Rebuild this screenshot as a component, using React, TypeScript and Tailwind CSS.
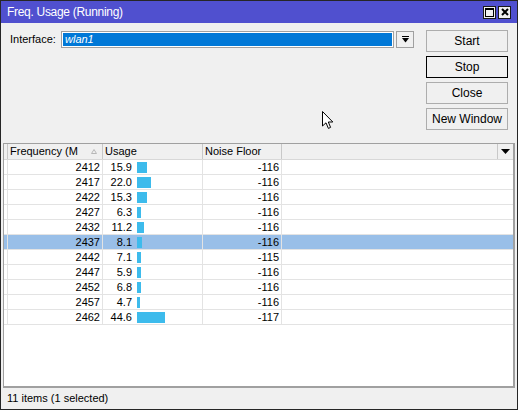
import React from "react";

type FreqRow = {
  freq: number;
  usage: string;
  noise: number;
};

const rows: FreqRow[] = [
  { freq: 2412, usage: "15.9", noise: -116 },
  { freq: 2417, usage: "22.0", noise: -116 },
  { freq: 2422, usage: "15.3", noise: -116 },
  { freq: 2427, usage: "6.3", noise: -116 },
  { freq: 2432, usage: "11.2", noise: -116 },
  { freq: 2437, usage: "8.1", noise: -116 },
  { freq: 2442, usage: "7.1", noise: -115 },
  { freq: 2447, usage: "5.9", noise: -116 },
  { freq: 2452, usage: "6.8", noise: -116 },
  { freq: 2457, usage: "4.7", noise: -116 },
  { freq: 2462, usage: "44.6", noise: -117 },
];

const selectedFreq = 2437;

function SideButton({ label, focused }: { label: string; focused?: boolean }) {
  return (
    <button
      className={
        focused
          ? "h-[22px] w-[82px] border border-black bg-[#f0f0f0] text-[12px] text-black"
          : "h-[22px] w-[82px] border border-[#adadad] bg-[#f0f0f0] text-[12px] text-black"
      }
    >
      {label}
    </button>
  );
}

export default function App() {
  return (
    <div className="relative flex h-[410px] w-[518px] flex-col overflow-hidden border border-[#262626] bg-[#f0f0f0] font-['Liberation_Sans',Arial,sans-serif] text-[11px] text-black">
      {/* title bar */}
      <div className="flex h-[22px] items-center bg-[#5050cf] pl-[6px] pr-[6px]">
        <span className="text-[12px] tracking-[-0.3px] text-white">Freq. Usage (Running)</span>
        <div className="ml-auto flex gap-[2px]">
          <div className="flex h-[13px] w-[13px] items-center justify-center border border-[#1a1a1a] bg-[#f0f0f0]">
            <svg width="9" height="9" viewBox="0 0 9 9">
              <rect x="0.5" y="0.5" width="8" height="8" fill="none" stroke="#000" />
              <rect x="0" y="0" width="9" height="2" fill="#000" />
            </svg>
          </div>
          <div className="flex h-[13px] w-[13px] items-center justify-center border border-[#1a1a1a] bg-[#f0f0f0]">
            <svg width="8" height="8" viewBox="0 0 8 8">
              <path d="M1 1 L7 7 M7 1 L1 7" stroke="#000" strokeWidth="2" />
            </svg>
          </div>
        </div>
      </div>

      {/* interface row + buttons */}
      <div className="flex h-[120px] pl-[9px] pr-[9px] pt-[7px]">
        <div className="mt-[1px] flex h-[17px] items-center">
          <span className="w-[51px]">Interface:</span>
          <div className="flex h-[17px] w-[333px] items-center border border-[#a0a0a0] bg-white p-[1px]">
            <div className="flex h-full w-full items-center bg-[#0078d7] pl-[2px] italic text-white">wlan1</div>
          </div>
          <div className="ml-[2px] flex h-[17px] w-[18px] items-center justify-center border border-[#a0a0a0] bg-[#f0f0f0]">
            <svg width="7" height="7" viewBox="0 0 7 7">
              <rect x="0" y="0" width="7" height="1" fill="#000" />
              <path d="M0 2 L7 2 L3.5 6.5 Z" fill="#000" />
            </svg>
          </div>
        </div>
        <div className="ml-auto flex flex-col gap-[4px]">
          <SideButton label="Start" />
          <SideButton label="Stop" focused />
          <SideButton label="Close" />
          <SideButton label="New Window" />
        </div>
      </div>

      {/* list */}
      <div className="ml-[2px] mr-[2px] flex min-h-0 flex-1 flex-col border-b-2 border-l border-r-2 border-t border-[#a0a0a0] bg-white">
        <div className="grid h-[16px] grid-cols-[4px_95px_100px_79px_1fr_15px] border-b border-[#d8d8d8] bg-[#f0f0f0] leading-[15px]">
          <div className="border-r border-[#c8c8c8]" />
          <div className="flex items-center border-r border-[#c8c8c8] pl-[2px]">
            <span>Frequency (M</span>
            <svg className="ml-auto mr-[5px]" width="6" height="5" viewBox="0 0 6 5">
              <path d="M3 0.5 L5.5 4.5 L0.5 4.5 Z" fill="none" stroke="#b8b8b8" />
            </svg>
          </div>
          <div className="border-r border-[#c8c8c8] pl-[2px]">Usage</div>
          <div className="border-r border-[#c8c8c8] pl-[2px]">Noise Floor</div>
          <div className="border-r border-[#c8c8c8]" />
          <div className="flex items-center justify-center">
            <svg width="9" height="5" viewBox="0 0 9 5">
              <path d="M0 0 L9 0 L4.5 5 Z" fill="#000" />
            </svg>
          </div>
        </div>

        {rows.map((row) => {
          const selected = row.freq === selectedFreq;
          return (
            <div
              key={row.freq}
              className={
                selected
                  ? "grid h-[15px] grid-cols-[4px_95px_100px_79px_1fr] border-b border-[#e3e3e3] bg-[#99bfe8] leading-[14px]"
                  : "grid h-[15px] grid-cols-[4px_95px_100px_79px_1fr] border-b border-[#e3e3e3] leading-[14px]"
              }
            >
              <div className="border-r border-[#e3e3e3]" />
              <div className="border-r border-[#e3e3e3] pr-[2px] text-right">{row.freq}</div>
              <div className="flex items-center border-r border-[#e3e3e3]">
                <span className="w-[30px] pr-[1px] text-right">{row.usage}</span>
                <div
                  className="ml-[4px] h-[11px] bg-[#3dbbec]"
                  style={{ width: Math.max(2, Math.round(parseFloat(row.usage) * 0.63)) }}
                />
              </div>
              <div className="border-r border-[#e3e3e3] pr-[2px] text-right">{row.noise}</div>
              <div />
            </div>
          );
        })}
      </div>

      {/* status bar */}
      <div className="flex h-[21px] items-center pl-[6px]">11 items (1 selected)</div>

      {/* mouse pointer */}
      <svg className="absolute left-[320px] top-[109px]" width="13" height="20" viewBox="0 0 13 20">
        <path
          d="M1.5 1.5 L1.5 16 L5 12.8 L7.4 18.4 L9.6 17.4 L7.3 12 L11.8 12 Z"
          fill="#fff"
          stroke="#000"
          strokeWidth="1"
          strokeLinejoin="miter"
        />
      </svg>
    </div>
  );
}
